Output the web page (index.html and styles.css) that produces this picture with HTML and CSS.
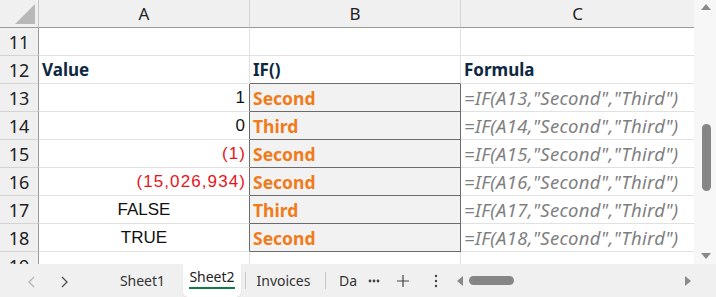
FILE: index.html
```html
<!DOCTYPE html>
<html lang="en">
<head>
    <meta charset="UTF-8">
    <title>Sheet2</title>
    <link rel="stylesheet" href="styles.css">
</head>
<body>
    <div class="app">
        <div class="main">
            <div class="sheet">
                <div class="grid">
                    <div class="corner"><div class="tri"></div></div>
                    <div class="colhead">A</div>
                    <div class="colhead">B</div>
                    <div class="colhead">C</div>

                    <div class="rowhead">11</div>
                    <div class="cell"></div>
                    <div class="cell"></div>
                    <div class="cell"></div>

                    <div class="rowhead">12</div>
                    <div class="cell label">Value</div>
                    <div class="cell label b-top">IF()</div>
                    <div class="cell label">Formula</div>

                    <div class="rowhead">13</div>
                    <div class="cell num b-left">1</div>
                    <div class="cell res">Second</div>
                    <div class="cell formula">=IF(A13,"Second","Third")</div>

                    <div class="rowhead">14</div>
                    <div class="cell num b-left">0</div>
                    <div class="cell res">Third</div>
                    <div class="cell formula">=IF(A14,"Second","Third")</div>

                    <div class="rowhead">15</div>
                    <div class="cell num neg b-left">(1)</div>
                    <div class="cell res">Second</div>
                    <div class="cell formula">=IF(A15,"Second","Third")</div>

                    <div class="rowhead">16</div>
                    <div class="cell num neg b-left">(15,026,934)</div>
                    <div class="cell res">Second</div>
                    <div class="cell formula">=IF(A16,"Second","Third")</div>

                    <div class="rowhead">17</div>
                    <div class="cell bool b-left">FALSE</div>
                    <div class="cell res">Third</div>
                    <div class="cell formula">=IF(A17,"Second","Third")</div>

                    <div class="rowhead">18</div>
                    <div class="cell bool b-left">TRUE</div>
                    <div class="cell res">Second</div>
                    <div class="cell formula">=IF(A18,"Second","Third")</div>

                    <div class="rowhead">19</div>
                    <div class="cell"></div>
                    <div class="cell"></div>
                    <div class="cell"></div>
                </div>
            </div>
            <div class="vscroll">
                <div class="arrow up"></div>
                <div class="vtrack"><div class="vthumb"></div></div>
                <div class="arrow down"></div>
            </div>
        </div>
        <div class="tabbar">
            <div class="nav">
                <svg width="10" height="12" viewBox="0 0 10 12"><path d="M7 1 L2 6 L7 11" fill="none" stroke="#b4b4b4" stroke-width="1.3"/></svg>
            </div>
            <div class="nav">
                <svg width="10" height="12" viewBox="0 0 10 12"><path d="M3 1 L8 6 L3 11" fill="none" stroke="#505050" stroke-width="1.3"/></svg>
            </div>
            <div class="tab t1">Sheet1</div>
            <div class="tab active"><span>Sheet2</span></div>
            <div class="sep"></div>
            <div class="tab t3">Invoices</div>
            <div class="sep"></div>
            <div class="tab t4">Da</div>
            <div class="more">
                <svg width="12" height="4" viewBox="0 0 12 4"><circle cx="2" cy="2" r="1.4" fill="#444"/><circle cx="6" cy="2" r="1.4" fill="#444"/><circle cx="10" cy="2" r="1.4" fill="#444"/></svg>
            </div>
            <div class="plus">
                <svg width="12" height="12" viewBox="0 0 12 12"><path d="M6 0 V12 M0 6 H12" stroke="#444" stroke-width="1.2"/></svg>
            </div>
            <div class="kebab">
                <svg width="4" height="14" viewBox="0 0 4 14"><circle cx="2" cy="2" r="1.2" fill="#444"/><circle cx="2" cy="7" r="1.2" fill="#444"/><circle cx="2" cy="12" r="1.2" fill="#444"/></svg>
            </div>
            <div class="hscroll">
                <div class="arrow left"></div>
                <div class="hthumb"></div>
                <div class="htrack"></div>
                <div class="arrow right"></div>
            </div>
        </div>
    </div>
</body>
</html>
```

FILE: styles.css
```css
*{
    margin: 0;
    padding: 0;
    box-sizing: border-box;
}
body{
    background-color: #f3f3f3;
    font-family: "Noto Sans", "Liberation Sans", sans-serif;
}
.app{
    width: 716px;
    height: 297px;
    overflow: hidden;
}
.main{
    display: flex;
    height: 264px;
}
.sheet{
    width: 694px;
    height: 264px;
    overflow: hidden;
    background-color: #fff;
}
.grid{
    display: grid;
    grid-template-columns: 39px 211px 211px 234px;
    grid-auto-rows: 28px;
}
.grid > div{
    border-right: 1px solid #e1e1e1;
    border-bottom: 1px solid #e1e1e1;
    display: flex;
    align-items: center;
    white-space: nowrap;
    overflow: hidden;
}
.corner{
    background-color: #f0f0f0;
    justify-content: flex-end;
    align-items: flex-end !important;
    border-right-color: #c6c6c6 !important;
    border-bottom-color: #9a9a9a !important;
}
.tri{
    width: 0;
    height: 0;
    border-left: 20px solid transparent;
    border-bottom: 20px solid #b8b8b8;
    margin: 0 3px 3px 0;
}
.colhead{
    background-color: #f0f0f0;
    justify-content: center;
    font-size: 17px;
    color: #222;
    border-right-color: #d4d4d4 !important;
    border-bottom-color: #9a9a9a !important;
}
.rowhead{
    background-color: #f0f0f0;
    justify-content: center;
    font-size: 18px;
    color: #222;
    border-right-color: #9a9a9a !important;
    border-bottom-color: #d4d4d4 !important;
}
.cell{
    padding: 0 3px;
}
.label{
    font-weight: bold;
    font-size: 17px;
    color: #0e2841;
}
.b-top{
    border-bottom-color: #6b6b6b !important;
}
.b-left{
    border-right-color: #6b6b6b !important;
}
.num{
    justify-content: flex-end;
    font-family: "Liberation Sans", Arial, sans-serif;
    font-size: 17px;
    letter-spacing: 1.1px;
    color: #111;
}
.neg{
    color: #e8141c;
}
.bool{
    justify-content: center;
    font-family: "Liberation Sans", Arial, sans-serif;
    font-size: 17px;
    color: #111;
}
.res{
    background-color: #f2f2f2;
    font-weight: bold;
    font-size: 17.5px;
    color: #f07b1a;
    border-right-color: #6b6b6b !important;
    border-bottom-color: #6b6b6b !important;
}
.formula{
    font-style: italic;
    font-size: 18.5px;
    letter-spacing: 0.3px;
    color: #7f7f7f;
}
.vscroll{
    width: 22px;
    display: flex;
    flex-direction: column;
    align-items: center;
    background-color: #f7f7f7;
    padding: 4px 0 2px 2px;
}
.vtrack{
    flex: 1;
    padding-top: 114px;
}
.vthumb{
    width: 9px;
    height: 67px;
    border-radius: 5px;
    background-color: #868686;
}
.arrow{
    width: 0;
    height: 0;
}
.arrow.up{
    border-left: 5px solid transparent;
    border-right: 5px solid transparent;
    border-bottom: 6px solid #8a8a8a;
}
.arrow.down{
    border-left: 5px solid transparent;
    border-right: 5px solid transparent;
    border-top: 6px solid #8a8a8a;
    margin-bottom: 3px;
}
.arrow.left{
    border-top: 5px solid transparent;
    border-bottom: 5px solid transparent;
    border-right: 6px solid #8a8a8a;
}
.arrow.right{
    border-top: 5px solid transparent;
    border-bottom: 5px solid transparent;
    border-left: 6px solid #8a8a8a;
}
.tabbar{
    display: flex;
    align-items: center;
    height: 33px;
    padding-left: 16px;
    background-color: #f0f0f0;
    font-size: 14px;
    color: #333;
}
.nav{
    width: 32px;
    display: flex;
    justify-content: center;
    align-items: center;
    padding-top: 2px;
}
.tab{
    height: 33px;
    display: flex;
    align-items: center;
    justify-content: center;
    padding-bottom: 1px;
}
.t1{
    margin-left: 22px;
    width: 81px;
}
.active{
    width: 58px;
    background-color: #fff;
    border-radius: 0 0 5px 5px;
    margin-top: -3px;
    height: 36px;
    color: #222;
    box-shadow: 0 1px 2px rgba(0,0,0,0.08);
}
.active span{
    border-bottom: 2px solid #107c41;
    padding-bottom: 1px;
    margin-top: -2px;
}
.sep{
    width: 1px;
    height: 17px;
    background-color: #c8c8c8;
    margin-left: 4px;
}
.t3{
    width: 75px;
}
.t4{
    width: 37px;
    justify-content: flex-start;
    padding-left: 13px;
}
.more{
    width: 22px;
    display: flex;
    justify-content: center;
}
.plus{
    width: 24px;
    margin-left: 6px;
    display: flex;
    justify-content: center;
}
.kebab{
    width: 22px;
    margin-left: 10px;
    display: flex;
    justify-content: center;
}
.hscroll{
    flex: 1;
    display: flex;
    align-items: center;
    padding: 0 25px 0 9px;
    margin-left: 1px;
}
.hthumb{
    width: 45px;
    height: 9px;
    border-radius: 5px;
    background-color: #868686;
    margin-left: 6px;
}
.htrack{
    flex: 1;
}
```
